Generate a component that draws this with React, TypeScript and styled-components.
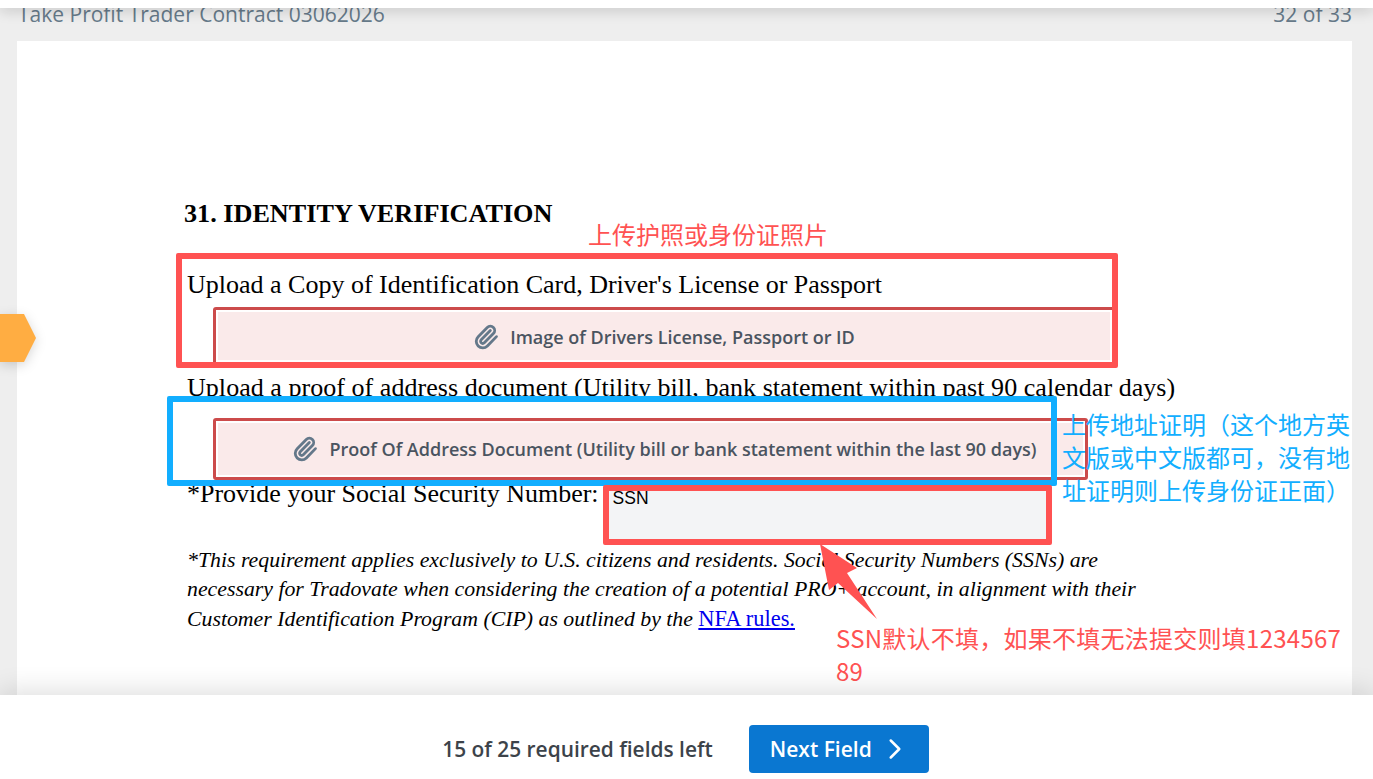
import React from 'react'
import styled, { createGlobalStyle } from 'styled-components'
import { Paperclip, ChevronRight } from 'lucide-react'

const GlobalStyle = createGlobalStyle`
  html, body {
    margin: 0;
    padding: 0;
    background: #eeeeee;
  }
`

const Shell = styled.div`
  position: relative;
  width: 1373px;
  height: 779px;
  overflow: hidden;
  display: flex;
  flex-direction: column;
  background: #eeeeee;
  font-family: 'Open Sans', 'Liberation Sans', sans-serif;
`

const TopBar = styled.div`
  position: relative;
  z-index: 3;
  height: 8px;
  flex: none;
  background: #ffffff;
  box-shadow: 0 2px 14px rgba(0, 0, 0, 0.22);
`

const DocHeader = styled.div`
  height: 33px;
  flex: none;
  display: flex;
  justify-content: space-between;
  padding: 0 21px 0 18px;
  font-size: 21px;
  line-height: 28px;
  color: #667a8a;
  overflow: hidden;
`

const HeaderText = styled.span`
  margin-top: -8px;
`

const PageWrap = styled.div`
  flex: 1;
  min-height: 0;
  padding: 0 21px 0 17px;
`

const Page = styled.div`
  height: 100%;
  box-sizing: border-box;
  padding: 158px 0 0 170px;
  background: #ffffff;
  font-family: 'Liberation Serif', 'Times New Roman', serif;
  color: #000000;
  overflow: hidden;
`

const Heading = styled.h2`
  margin: 0 0 0 -3px;
  font-size: 26.2px;
  line-height: 30px;
  font-weight: 700;
`

const DocLine = styled.div<{ $top: number; $spacing?: number }>`
  margin-top: ${(p) => p.$top}px;
  font-size: 26px;
  line-height: 30px;
  letter-spacing: ${(p) => p.$spacing ?? 0}px;
  white-space: nowrap;
`

const UploadField = styled.div<{ $width: number; $height: number; $top: number }>`
  box-sizing: border-box;
  width: ${(p) => p.$width}px;
  height: ${(p) => p.$height}px;
  margin: ${(p) => p.$top}px 0 0 26px;
  padding: 2px;
  border: 3px solid #cc4b4b;
  border-radius: 3px;
`

const FieldFill = styled.div<{ $shift: number; $drop: number }>`
  height: 100%;
  box-sizing: border-box;
  padding: ${(p) => p.$drop}px 0 0 ${(p) => p.$shift}px;
  background: #faeaea;
  display: flex;
  align-items: center;
  justify-content: center;
  gap: 11px;
  font-family: 'Open Sans', 'Liberation Sans', sans-serif;
  font-size: 18px;
  font-weight: 600;
  color: #4a5460;
  white-space: nowrap;

  svg {
    color: #64788a;
    flex: none;
  }
`

const SsnRow = styled.div`
  display: flex;
  align-items: flex-start;
  margin-top: -1px;
`

const SsnLabel = styled.span`
  font-size: 26px;
  line-height: 30px;
  white-space: nowrap;
`

const SsnInput = styled.div`
  box-sizing: border-box;
  width: 439px;
  height: 49px;
  margin: 11px 0 0 10px;
  padding: 0 4px;
  background: #f3f4f6;
  font-family: 'Liberation Sans', Arial, sans-serif;
  font-size: 17.5px;
  line-height: 16px;
  color: #000000;
`

const Note = styled.p`
  margin: 7px 0 0;
  font-size: 21.8px;
  line-height: 29px;
  font-style: italic;
  white-space: nowrap;

  a {
    color: #0000ee;
    font-size: 22.4px;
    font-style: normal;
    text-decoration: underline;
  }
`

const Footer = styled.div`
  position: relative;
  z-index: 3;
  height: 84px;
  flex: none;
  display: flex;
  align-items: center;
  justify-content: center;
  gap: 36px;
  padding: 24px 2px 0 0;
  box-sizing: border-box;
  background: #ffffff;
  box-shadow: 0 -3px 26px rgba(0, 0, 0, 0.14);
`

const FieldsLeft = styled.span`
  font-size: 20.9px;
  font-weight: 600;
  color: #3c434a;
`

const NextButton = styled.button`
  width: 180px;
  height: 48px;
  padding: 0 0 0 4px;
  display: flex;
  align-items: center;
  justify-content: center;
  gap: 6px;
  border: none;
  border-radius: 4px;
  background: #0a77d1;
  color: #ffffff;
  font-family: inherit;
  font-size: 21px;
  font-weight: 600;
`

const MarkerShadow = styled.div`
  position: absolute;
  left: 0;
  top: 314px;
  filter: drop-shadow(0 3px 6px rgba(0, 0, 0, 0.16));
`

const Marker = styled.div`
  width: 36px;
  height: 48px;
  background: #ffad42;
  clip-path: polygon(0 0, 24px 0, 100% 50%, 24px 100%, 0 100%);
`

const Callout = styled.div<{ $x: number; $y: number; $w: number; $h: number; $color: string }>`
  position: absolute;
  left: ${(p) => p.$x}px;
  top: ${(p) => p.$y}px;
  width: ${(p) => p.$w}px;
  height: ${(p) => p.$h}px;
  box-sizing: border-box;
  border: 6px solid ${(p) => p.$color};
  border-radius: 2px;
  z-index: 1;
`

const Remark = styled.div<{ $x: number; $y: number; $w: number; $color: string; $spacing?: number }>`
  position: absolute;
  left: ${(p) => p.$x}px;
  top: ${(p) => p.$y}px;
  width: ${(p) => p.$w}px;
  font-family: 'Noto Sans CJK SC', 'Noto Sans', sans-serif;
  font-size: 24px;
  line-height: 33px;
  letter-spacing: ${(p) => p.$spacing ?? 0}px;
  color: ${(p) => p.$color};
  word-break: break-all;
  z-index: 2;
`

const ArrowSvg = styled.svg`
  position: absolute;
  left: 810px;
  top: 536px;
  z-index: 2;
`

const App: React.FC = () => {
  return (
    <Shell>
      <GlobalStyle />
      <TopBar />
      <DocHeader>
        <HeaderText>Take Profit Trader Contract 03062026</HeaderText>
        <HeaderText>32 of 33</HeaderText>
      </DocHeader>
      <PageWrap>
        <Page>
          <Heading>31. IDENTITY VERIFICATION</Heading>
          <DocLine $top={41}>Upload a Copy of Identification Card, Driver's License or Passport</DocLine>
          <UploadField $width={902} $height={58} $top={7}>
            <FieldFill $shift={0} $drop={2}>
              <Paperclip size={26} strokeWidth={2.6} />
              Image of Drivers License, Passport or ID
            </FieldFill>
          </UploadField>
          <DocLine $top={8} $spacing={0.043}>
            Upload a proof of address document (Utility bill, bank statement within past 90 calendar days)
          </DocLine>
          <UploadField $width={875} $height={62} $top={15}>
            <FieldFill $shift={28} $drop={0}>
              <Paperclip size={26} strokeWidth={2.6} />
              Proof Of Address Document (Utility bill or bank statement within the last 90 days)
            </FieldFill>
          </UploadField>
          <SsnRow>
            <SsnLabel>*Provide your Social Security Number:</SsnLabel>
            <SsnInput>SSN</SsnInput>
          </SsnRow>
          <Note>
            *This requirement applies exclusively to U.S. citizens and residents. Social Security Numbers (SSNs) are
            <br />
            necessary for Tradovate when considering the creation of a potential PRO+ account, in alignment with their
            <br />
            Customer Identification Program (CIP) as outlined by the <a href="#nfa">NFA rules.</a>
          </Note>
        </Page>
      </PageWrap>
      <Footer>
        <FieldsLeft>15 of 25 required fields left</FieldsLeft>
        <NextButton>
          Next Field
          <ChevronRight size={34} strokeWidth={1.8} />
        </NextButton>
      </Footer>

      <MarkerShadow>
        <Marker />
      </MarkerShadow>
      <Callout $x={176} $y={253} $w={942} $h={115} $color="#ff5252" />
      <Callout $x={167} $y={396} $w={890} $h={90} $color="#12aeff" />
      <Callout $x={603} $y={485} $w={449} $h={60} $color="#ff5252" />
      <Remark $x={588} $y={217} $w={260} $color="#ff5252">上传护照或身份证照片</Remark>
      <Remark $x={1062} $y={407} $w={290} $color="#12aeff">
        上传地址证明（这个地方英文版或中文版都可，没有地址证明则上传身份证正面）
      </Remark>
      <Remark $x={836} $y={621} $w={510} $color="#ff5252" $spacing={0.25}>
        SSN默认不填，如果不填无法提交则填123456789
      </Remark>
      <ArrowSvg width="80" height="90" viewBox="810 536 80 90">
        <polygon points="820,544 857,568 847,573 877,619 838,583 829,590" fill="#ff5252" />
      </ArrowSvg>
    </Shell>
  )
}

export default App
